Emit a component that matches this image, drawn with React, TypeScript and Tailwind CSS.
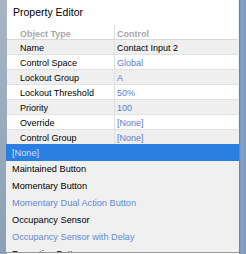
import React from "react";

const rows: { label: string; value: string; blue: boolean }[] = [
  { label: "Name", value: "Contact Input 2", blue: false },
  { label: "Control Space", value: "Global", blue: true },
  { label: "Lockout Group", value: "A", blue: true },
  { label: "Lockout Threshold", value: "50%", blue: true },
  { label: "Priority", value: "100", blue: true },
  { label: "Override", value: "[None]", blue: true },
  { label: "Control Group", value: "[None]", blue: true },
];

const items: { text: string; blue: boolean }[] = [
  { text: "Maintained Button", blue: false },
  { text: "Momentary Button", blue: false },
  { text: "Momentary Dual Action Button", blue: true },
  { text: "Occupancy Sensor", blue: false },
  { text: "Occupancy Sensor with Delay", blue: true },
  { text: "Repeating Button", blue: false },
];

export default function App() {
  return (
    <div
      className="relative flex w-[246px] h-[254px] overflow-hidden bg-[#93a6bc]"
      style={{ fontFamily: '"Liberation Sans", Arial, sans-serif' }}
    >
      <div className="w-[7px] shrink-0 bg-[linear-gradient(to_bottom,#a7b5c5,#8c9fb6)]" />
      <div className="w-[231px] shrink-0 bg-white flex flex-col">
        <div className="h-[25px] pl-[6px] pt-[6px] text-[10.5px] leading-[13px] text-black">
          Property Editor
        </div>
        <div className="flex h-[15px] border-b border-[#d8d8d8] text-[9px] font-bold text-[#a8a8a8]">
          <div className="w-[108px] pl-[13px] pt-[4px] leading-[10px] border-r border-[#e0e0e0]">Object Type</div>
          <div className="pl-[2px] pt-[4px] leading-[10px]">Control</div>
        </div>
        {rows.map((r, i) => (
          <div
            key={r.label}
            className={`flex h-[15px] border-b border-[#e2e2e2] text-[9px] ${i % 2 === 0 ? "bg-[#efefef]" : "bg-white"}`}
          >
            <div className="w-[108px] pl-[13px] pt-[3px] leading-[10px] text-black border-r border-[#e0e0e0]">{r.label}</div>
            <div className={`pl-[2px] pt-[3px] leading-[10px] ${r.blue ? "text-[#5a7ecf]" : "text-black"}`}>{r.value}</div>
          </div>
        ))}
      </div>
      <div className="flex-1 border-l border-[#e8eef5] bg-[linear-gradient(to_right,#5f7fa6,#86a3c6_30%,#7c9bc0)]" />
      <div className="absolute left-[6px] top-[144px] w-[233px] h-[109px] bg-[#f0f0f0] border-b border-[#9a9a9a] overflow-hidden text-[9.2px]">
        <div className="h-[17px] bg-[#2b7ee2] pl-[6px] pt-[4px] leading-[10px] text-[#cfe0ff]">[None]</div>
        {items.map((it) => (
          <div
            key={it.text}
            className={`h-[17px] pl-[6px] pt-[3px] leading-[10px] ${it.blue ? "text-[#6489d8]" : "text-black"}`}
          >
            {it.text}
          </div>
        ))}
      </div>
    </div>
  );
}
